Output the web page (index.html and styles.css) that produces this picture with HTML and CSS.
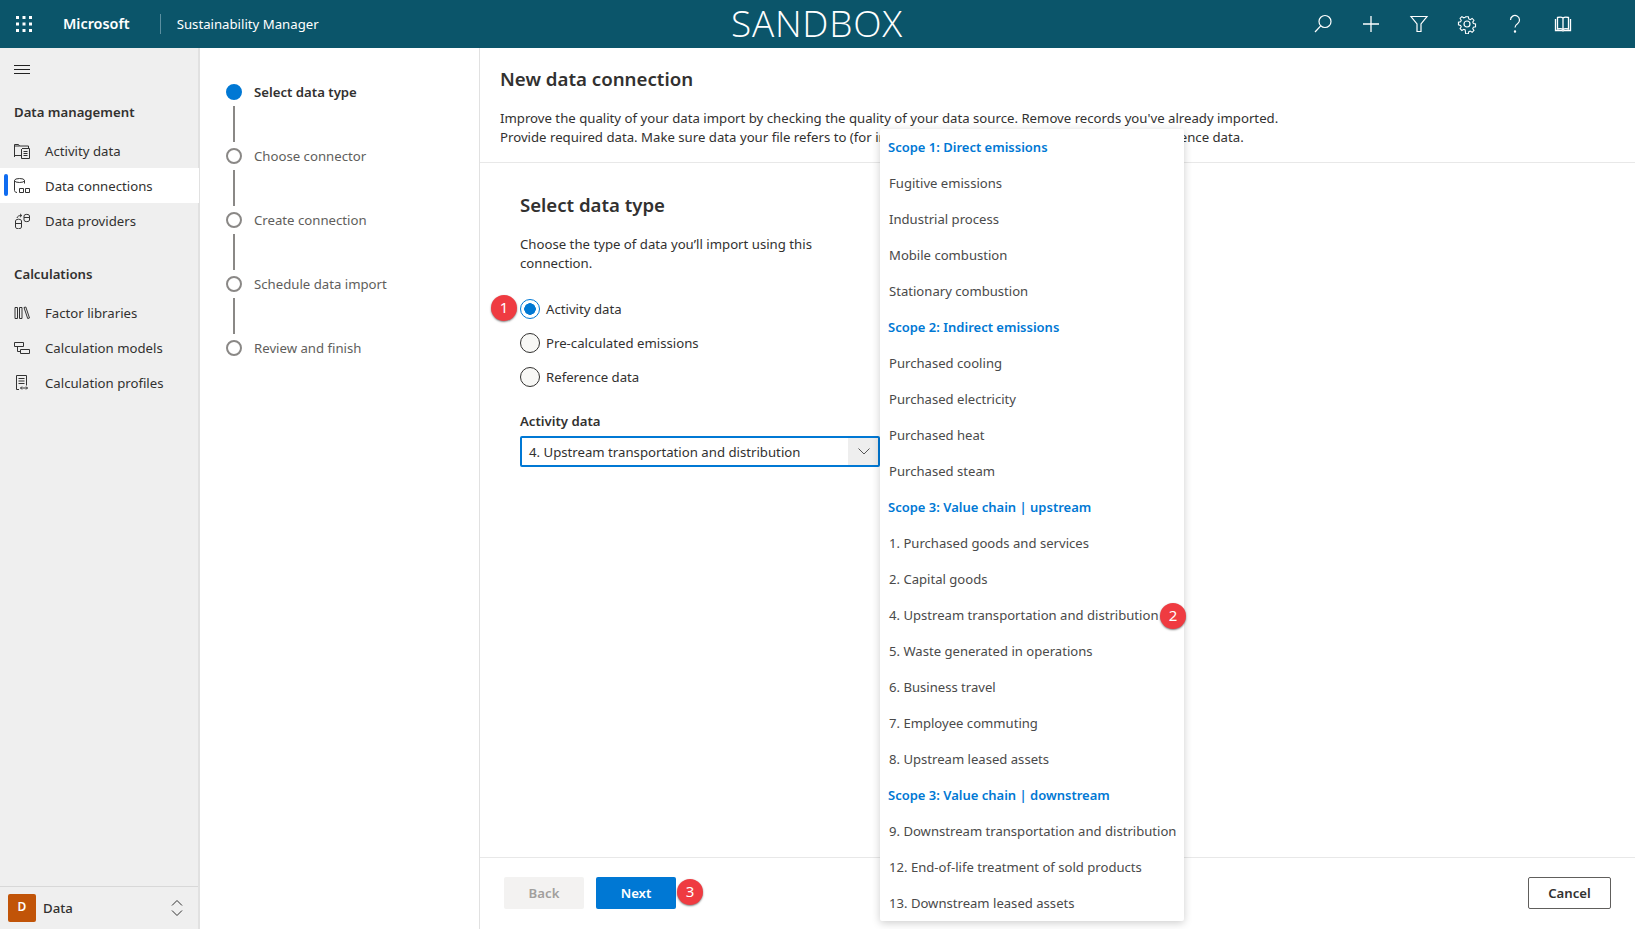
FILE: index.html
```html
<!DOCTYPE html>
<html lang="en">
<head>
    <meta charset="UTF-8">
    <meta name="viewport" content="width=device-width, initial-scale=1.0">
    <title>Sustainability Manager</title>
    <link rel="stylesheet" href="styles.css">
</head>
<body>
    <header class="topbar">
        <svg class="waffle" width="16" height="16" viewBox="0 0 16 16" fill="#fff">
            <rect x="0" y="0" width="3" height="3"/><rect x="6.5" y="0" width="3" height="3"/><rect x="13" y="0" width="3" height="3"/>
            <rect x="0" y="6.5" width="3" height="3"/><rect x="6.5" y="6.5" width="3" height="3"/><rect x="13" y="6.5" width="3" height="3"/>
            <rect x="0" y="13" width="3" height="3"/><rect x="6.5" y="13" width="3" height="3"/><rect x="13" y="13" width="3" height="3"/>
        </svg>
        <span class="brand">Microsoft</span>
        <span class="app-name">Sustainability Manager</span>
        <span class="sandbox">SANDBOX</span>
        <div class="top-icons">
            <span class="top-icon">
                <svg width="20" height="20" viewBox="0 0 20 20" fill="none" stroke="#fff" stroke-width="1.2"><circle cx="12" cy="7.5" r="6"/><path d="M7.7 11.8 2 18"/></svg>
            </span>
            <span class="top-icon">
                <svg width="20" height="20" viewBox="0 0 20 20" fill="none" stroke="#fff" stroke-width="1.3"><path d="M10 2v16M2 10h16"/></svg>
            </span>
            <span class="top-icon">
                <svg width="20" height="20" viewBox="0 0 20 20" fill="none" stroke="#fff" stroke-width="1.2"><path d="M2 2.5h16l-6 7.5v7.5H8V10z"/></svg>
            </span>
            <span class="top-icon">
                <svg width="20" height="20" viewBox="0 0 20 20" fill="none" stroke="#fff" stroke-width="1.2"><circle cx="10" cy="10" r="3"/><path d="M8.5 2h3l.5 2.4 1.6.7 2.1-1.3 2 2-1.3 2.1.7 1.6 2.4.5v3l-2.4.5-.7 1.6 1.3 2.1-2 2-2.1-1.3-1.6.7-.5 2.4h-3L8 16.6l-1.6-.7-2.1 1.3-2-2 1.3-2.1-.7-1.6L.5 11V8l2.4-.5.7-1.6-1.3-2.1 2-2 2.1 1.3L8 2.400z" transform="translate(1 1) scale(.9)"/></svg>
            </span>
            <span class="top-icon">
                <svg width="20" height="20" viewBox="0 0 20 20" fill="none" stroke="#fff" stroke-width="1.2"><path d="M5.500 6a4.500 4.500 0 1 1 7 3.700c-1.600 1.100-2.500 1.900-2.500 3.800"/><circle cx="10" cy="17.500" r=".6" fill="#fff"/></svg>
            </span>
            <span class="top-icon">
                <svg width="20" height="20" viewBox="0 0 20 20" fill="none" stroke="#fff" stroke-width="1.3"><path d="M4.500 3.500C6.500 3 8.800 3 10 4c1.200-1 3.500-1 5.500-.5V15c-2-.5-4.300-.5-5.500.5-1.200-1-3.500-1-5.500-.5zM10 4v11.500"/><path d="M2.500 5v11.500H9c.5.400 1.500.400 2 0h6.500V5"/></svg>
            </span>
        </div>
    </header>

    <div class="layout">
        <nav class="sidebar">
            <svg class="hamburger" width="16" height="9" viewBox="0 0 16 9" stroke="#222" stroke-width="1"><path d="M0 .5h16M0 4.500h16M0 8.500h16"/></svg>

            <h2 class="nav-title">Data management</h2>
            <a class="nav-item">
                <svg class="nav-icon" width="16" height="16" viewBox="0 0 16 16" fill="none" stroke="#333"><path d="M.5 14V1.500h4l1 1.500h9v2M.5 3h5"/><path d="M8 5.500h7.500v10H7.500V6M.5 12.500h7"/><path d="M9.500 8.500h4M9.500 10.500h4M9.500 12.500h4"/></svg>
                <span>Activity data</span>
            </a>
            <a class="nav-item active">
                <svg class="nav-icon" width="16" height="16" viewBox="0 0 16 16" fill="none" stroke="#333"><ellipse cx="5.500" cy="2.500" rx="5" ry="2"/><path d="M.5 2.500v10c0 1 .8 1.800 2.500 2M10.500 2.500v3"/><path d="M5.500 10.500h4v4h-4zM11.500 10.500h4v4h-4z"/></svg>
                <span>Data connections</span>
            </a>
            <a class="nav-item">
                <svg class="nav-icon" width="16" height="16" viewBox="0 0 16 16" fill="none" stroke="#333"><path d="M1.500 8a2.500 1.500 0 0 1 6 0v6a2.500 1.500 0 0 1-6 0zM1.500 10.500h6"/><path d="M10 3a2.500 1.500 0 0 1 5.500 0v4a2.500 1.500 0 0 1-5.500 0zM10 4.500h5.500"/><path d="M3 5C3.500 3 5 2.500 7.500 2.500M6 .8l1.800 1.700L6 4.200"/></svg>
                <span>Data providers</span>
            </a>

            <h2 class="nav-title second">Calculations</h2>
            <a class="nav-item">
                <svg class="nav-icon" width="16" height="16" viewBox="0 0 16 16" fill="none" stroke="#333"><path d="M1 2.500h2.500v11H1zM5.500 2.500H8v11H5.500zM10 2.500l1.800-.5 3.700 11-1.800.5z"/></svg>
                <span>Factor libraries</span>
            </a>
            <a class="nav-item">
                <svg class="nav-icon" width="16" height="16" viewBox="0 0 16 16" fill="none" stroke="#333"><path d="M.5 2.500h9v4h-9zM6.500 9.500h9v4h-9zM3.500 6.500v5h3"/></svg>
                <span>Calculation models</span>
            </a>
            <a class="nav-item">
                <svg class="nav-icon" width="16" height="16" viewBox="0 0 16 16" fill="none" stroke="#333"><path d="M5 14.500H2.500V.5h10v10M4.500 3.500h6M4.500 6h6M4.500 8.500h6"/><path d="M6.500 13h7M8 11.500 6.500 13 8 14.500M12 11.500l1.500 1.500-1.500 1.500"/></svg>
                <span>Calculation profiles</span>
            </a>

            <div class="area-switch">
                <span class="avatar">D</span>
                <span class="area-name">Data</span>
                <svg width="12" height="18" viewBox="0 0 12 18" fill="none" stroke="#333"><path d="M1 6.500 6 1.500l5 5M1 11.500l5 5 5-5"/></svg>
            </div>
        </nav>

        <aside class="stepper">
            <div class="step current"><span class="dot"></span><span>Select data type</span></div>
            <div class="step-line"></div>
            <div class="step"><span class="dot"></span><span>Choose connector</span></div>
            <div class="step-line"></div>
            <div class="step"><span class="dot"></span><span>Create connection</span></div>
            <div class="step-line"></div>
            <div class="step"><span class="dot"></span><span>Schedule data import</span></div>
            <div class="step-line"></div>
            <div class="step"><span class="dot"></span><span>Review and finish</span></div>
        </aside>

        <main class="main">
            <div class="main-head">
                <h1>New data connection</h1>
                <p>Improve the quality of your data import by checking the quality of your data source. Remove records you've already imported.<br>
                Provide required data. Make sure data your file refers to (for instance, facility or business units) is in your reference data.</p>
            </div>

            <div class="main-body">
                <h2>Select data type</h2>
                <p class="hint">Choose the type of data you’ll import using this connection.</p>

                <div class="radio checked"><span class="radio-mark"></span>Activity data</div>
                <div class="radio"><span class="radio-mark"></span>Pre-calculated emissions</div>
                <div class="radio"><span class="radio-mark"></span>Reference data</div>

                <label class="field-label">Activity data</label>
                <div class="select-box">
                    <span class="select-value">4. Upstream transportation and distribution</span>
                    <span class="select-btn">
                        <svg width="12" height="7" viewBox="0 0 12 7" fill="none" stroke="#555"><path d="M.5.500 6 6l5.500-5.500"/></svg>
                    </span>
                </div>
            </div>

            <div class="main-foot">
                <button class="btn disabled" type="button">Back</button>
                <button class="btn primary" type="button">Next</button>
                <button class="btn outline" type="button">Cancel</button>
            </div>

            <ul class="dropdown">
                <li class="group">Scope 1: Direct emissions</li>
                <li>Fugitive emissions</li>
                <li>Industrial process</li>
                <li>Mobile combustion</li>
                <li>Stationary combustion</li>
                <li class="group">Scope 2: Indirect emissions</li>
                <li>Purchased cooling</li>
                <li>Purchased electricity</li>
                <li>Purchased heat</li>
                <li>Purchased steam</li>
                <li class="group">Scope 3: Value chain | upstream</li>
                <li>1. Purchased goods and services</li>
                <li>2. Capital goods</li>
                <li>4. Upstream transportation and distribution</li>
                <li>5. Waste generated in operations</li>
                <li>6. Business travel</li>
                <li>7. Employee commuting</li>
                <li>8. Upstream leased assets</li>
                <li class="group">Scope 3: Value chain | downstream</li>
                <li>9. Downstream transportation and distribution</li>
                <li>12. End-of-life treatment of sold products</li>
                <li>13. Downstream leased assets</li>
            </ul>

            <span class="badge badge-1">1</span>
            <span class="badge badge-2">2</span>
            <span class="badge badge-3">3</span>
        </main>
    </div>
</body>
</html>
```

FILE: styles.css
```css
* {
    box-sizing: border-box;
}

body {
    margin: 0;
    height: 929px;
    overflow: hidden;
    font-family: "Noto Sans", "Open Sans", sans-serif;
    font-size: 13.2px;
    color: #323130;
    background-color: #fff;
}

/* top bar */
.topbar {
    position: relative;
    display: flex;
    align-items: center;
    height: 48px;
    background-color: #0b556a;
    color: #fff;
}

.waffle {
    margin-left: 16px;
}

.brand {
    margin-left: 31px;
    padding-right: 30px;
    font-size: 14.4px;
    font-weight: 600;
    line-height: 20px;
    border-right: 1px solid #5b8fa0;
}

.app-name {
    margin-left: 16px;
}

.sandbox {
    position: absolute;
    left: 731px;
    top: 1px;
    font-family: "Open Sans", sans-serif;
    font-size: 37px;
    font-weight: 300;
    line-height: 44px;
    letter-spacing: 0.75px;
}

.top-icons {
    display: flex;
    margin-left: auto;
    margin-right: 48px;
}

.top-icon {
    display: flex;
    align-items: center;
    justify-content: center;
    width: 48px;
    height: 48px;
}

.layout {
    display: flex;
    height: 881px;
}

/* left nav */
.sidebar {
    display: flex;
    flex-direction: column;
    width: 200px;
    flex-shrink: 0;
    background-color: #efefef;
    border-right: 2px solid #e1e1e1;
}

.hamburger {
    margin: 17px 0 0 14px;
}

.nav-title {
    margin: 0;
    padding: 28px 0 0 14px;
    height: 59px;
    font-size: 13.2px;
    font-weight: 600;
    line-height: 20px;
}

.nav-title.second {
    height: 55px;
    padding-top: 24px;
    margin-top: 2px;
}

.nav-item {
    position: relative;
    display: flex;
    align-items: center;
    height: 35px;
    padding-left: 14px;
}

.nav-item.active {
    background-color: #fff;
    margin-right: -1px;
}

.nav-item.active::before {
    content: "";
    position: absolute;
    left: 4px;
    top: 6px;
    width: 4px;
    height: 22px;
    border-radius: 2px;
    background-color: #0f6cf0;
}

.nav-icon {
    margin-right: 15px;
}

.area-switch {
    display: flex;
    align-items: center;
    margin-top: auto;
    height: 43px;
    padding: 0 15px 0 8px;
    border-top: 1px solid #d8d8d8;
}

.avatar {
    width: 28px;
    height: 28px;
    border-radius: 2px;
    background-color: #c15408;
    color: #fff;
    font-size: 12px;
    font-weight: 600;
    line-height: 26px;
    text-align: center;
}

.area-name {
    flex: 1;
    margin-left: 7px;
    font-weight: 500;
}

/* wizard steps */
.stepper {
    width: 279px;
    flex-shrink: 0;
    padding: 34px 0 0 26px;
    color: #605e5c;
}

.step {
    display: flex;
    align-items: center;
    height: 20px;
}

.step.current {
    color: #323130;
    font-weight: 600;
}

.dot {
    width: 16px;
    height: 16px;
    margin-right: 12px;
    border: 2px solid #8a8886;
    border-radius: 50%;
}

.current .dot {
    background-color: #0078d4;
    border-color: #0078d4;
}

.step-line {
    width: 2px;
    height: 44px;
    margin-left: 7px;
    padding: 0;
    background: linear-gradient(#8a8886, #8a8886) center / 2px 36px no-repeat;
}

/* main column */
.main {
    position: relative;
    flex: 1;
    display: flex;
    flex-direction: column;
    border-left: 1px solid #e1e1e1;
}

.main-head {
    height: 115px;
    padding: 18px 20px 0;
    border-bottom: 1px solid #e8e8e8;
}

.main-head h1 {
    margin: 0 0 17px;
    font-size: 18.7px;
    font-weight: 600;
    line-height: 26px;
}

.main-head p {
    margin: 0;
    line-height: 19px;
}

.main-body {
    flex: 1;
    padding: 28px 40px 0;
}

.main-body h2 {
    margin: 0 0 16px;
    font-size: 18.6px;
    font-weight: 600;
    line-height: 28px;
}

.hint {
    width: 320px;
    margin: 0 0 26px;
    line-height: 19px;
}

.radio {
    display: flex;
    align-items: center;
    height: 20px;
    margin-bottom: 14px;
}

.radio-mark {
    width: 20px;
    height: 20px;
    margin-right: 6px;
    border: 1px solid #323130;
    border-radius: 50%;
    background-color: #f8f8f6;
}

.checked .radio-mark {
    border-color: #0078d4;
    background: radial-gradient(circle, #0078d4 5.5px, #fff 6px);
}

.field-label {
    display: block;
    margin-top: 24px;
    font-weight: 600;
    line-height: 20px;
}

.select-box {
    display: flex;
    width: 360px;
    height: 31px;
    margin-top: 5px;
    border: 2px solid #0078d4;
    border-radius: 2px;
}

.select-value {
    flex: 1;
    padding: 1px 0 0 7px;
    line-height: 27px;
}

.select-btn {
    display: flex;
    align-items: center;
    justify-content: center;
    width: 30px;
    padding-left: 1px;
    background-color: #eeeeee;
}

.main-foot {
    display: flex;
    align-items: center;
    gap: 12px;
    height: 72px;
    padding: 0 24px 2px 24px;
    border-top: 1px solid #e8e8e8;
}

.btn {
    width: 80px;
    height: 32px;
    border-radius: 2px;
    border: none;
    font-family: inherit;
    font-size: 13.2px;
    font-weight: 600;
}

.btn.disabled {
    background-color: #f3f2f1;
    color: #a19f9d;
}

.btn.primary {
    background-color: #0078d4;
    color: #fff;
}

.btn.outline {
    width: 83px;
    margin-left: auto;
    background-color: #fff;
    border: 1px solid #605e5c;
    color: #323130;
}

/* open dropdown */
.dropdown {
    position: absolute;
    left: 400px;
    top: 81px;
    width: 304px;
    margin: 0;
    padding: 0;
    font-size: 13.1px;
    list-style: none;
    background-color: #fff;
    border-radius: 2px;
    box-shadow: 0 2px 8px rgba(0, 0, 0, 0.2);
}

.dropdown li {
    height: 36px;
    padding-left: 9px;
    line-height: 36px;
    color: #4a4a4a;
    white-space: nowrap;
}

.dropdown .group {
    padding-left: 8px;
    color: #0078d4;
    font-size: 13px;
    font-weight: 600;
}

/* numbered callouts */
.badge {
    position: absolute;
    width: 26px;
    height: 26px;
    border-radius: 50%;
    background-color: #ef3b41;
    box-shadow: 0 1px 2px rgba(0, 0, 0, 0.5);
    color: #fff;
    font-size: 15px;
    line-height: 24px;
    text-align: center;
}

.badge-1 {
    left: 11px;
    top: 247px;
}

.badge-2 {
    left: 680px;
    top: 555px;
}

.badge-3 {
    left: 197px;
    top: 831px;
}
```
